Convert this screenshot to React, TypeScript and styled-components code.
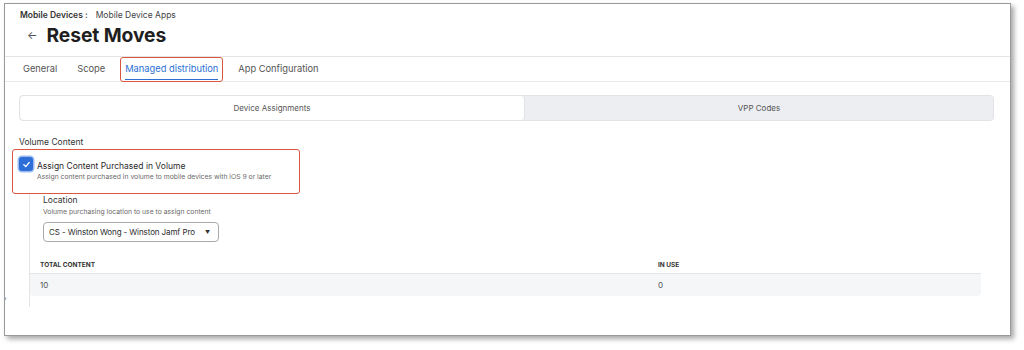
import React from "react";
import styled, { createGlobalStyle } from "styled-components";

const GlobalStyle = createGlobalStyle`
    html, body {
        margin: 0;
        padding: 0;
        background: #ffffff;
    }
    body {
        font-family: Inter, "Noto Sans", "Liberation Sans", sans-serif;
        color: #2b2b2b;
    }
`;

const tabs = ["General", "Scope", "Managed distribution", "App Configuration"];

export default function App() {
    return (
        <Page>
            <GlobalStyle />
            <Frame>
                <Header>
                    <Breadcrumb>
                        <strong>Mobile Devices :</strong>
                        <span>Mobile Device Apps</span>
                    </Breadcrumb>
                    <TitleRow>
                        <BackArrow>←</BackArrow>
                        <Title>Reset Moves</Title>
                    </TitleRow>
                </Header>

                <TabBar>
                    {tabs.map((tab) => (
                        <Tab key={tab} $active={tab === "Managed distribution"}>
                            {tab}
                        </Tab>
                    ))}
                </TabBar>

                <Content>
                    <Segmented>
                        <Segment $selected>Device Assignments</Segment>
                        <Segment>VPP Codes</Segment>
                    </Segmented>

                    <SectionLabel>Volume Content</SectionLabel>

                    <CheckRow>
                        <CheckBox>
                            <svg width="9" height="9" viewBox="0 0 10 10">
                                <path
                                    d="M2 5.2 L4.2 7.3 L8 2.8"
                                    fill="none"
                                    stroke="#ffffff"
                                    strokeWidth="1.4"
                                    strokeLinecap="round"
                                    strokeLinejoin="round"
                                />
                            </svg>
                        </CheckBox>
                        <CheckText>
                            <CheckLabel>Assign Content Purchased in Volume</CheckLabel>
                            <Hint>
                                Assign content purchased in volume to mobile devices
                                with iOS 9 or later
                            </Hint>
                        </CheckText>
                    </CheckRow>

                    <Nested>
                        <Field>
                            <FieldLabel>Location</FieldLabel>
                            <Hint>Volume purchasing location to use to assign content</Hint>
                            <Select>
                                <span>CS - Winston Wong - Winston Jamf Pro</span>
                                <Caret>▼</Caret>
                            </Select>
                        </Field>

                        <Table>
                            <HeadRow>
                                <HeadCell>Total Content</HeadCell>
                                <HeadCell>In Use</HeadCell>
                            </HeadRow>
                            <BodyRow>
                                <Cell>10</Cell>
                                <Cell>0</Cell>
                            </BodyRow>
                        </Table>
                    </Nested>
                </Content>
                <EdgeMark>›</EdgeMark>
            </Frame>
        </Page>
    );
}

const Page = styled.div`
    width: 1024px;
    height: 350px;
    padding: 3px 0 0 4px;
    box-sizing: border-box;
    overflow: hidden;
`;

const Frame = styled.div`
    position: relative;
    width: 1007px;
    height: 333px;
    box-sizing: border-box;
    border: 1px solid #9a9a9a;
    background: #ffffff;
    box-shadow: 3px 3px 5px rgba(0, 0, 0, 0.35);
    overflow: hidden;
`;

const Header = styled.div`
    height: 53px;
    padding: 5px 0 0 15px;
    box-sizing: border-box;
    border-bottom: 1px solid #e4e4e4;
`;

const Breadcrumb = styled.div`
    display: flex;
    gap: 8px;
    font-size: 8.5px;
    line-height: 12px;
    color: #444;

    strong {
        font-weight: 600;
        color: #333;
    }
`;

const TitleRow = styled.div`
    display: flex;
    align-items: center;
    gap: 9px;
    margin-top: 2px;
    padding-left: 7px;
`;

const BackArrow = styled.span`
    font-size: 11px;
    color: #555;
    line-height: 24px;
`;

const Title = styled.h1`
    margin: 0;
    font-size: 19.3px;
    line-height: 24px;
    font-weight: 700;
    color: #1f1f1f;
    letter-spacing: -0.1px;
`;

const TabBar = styled.div`
    display: flex;
    gap: 20px;
    height: 24px;
    padding-left: 18px;
    border-bottom: 1px solid #e8e8e8;
`;

const Tab = styled.div<{ $active?: boolean }>`
    position: relative;
    font-size: 9.3px;
    line-height: 24px;
    height: 22.5px;
    box-sizing: border-box;
    color: ${(p) => (p.$active ? "#2b6fd4" : "#555")};
    border-bottom: 1.5px solid ${(p) => (p.$active ? "#2b6fd4" : "transparent")};

    ${(p) =>
        p.$active &&
        `
        &::after {
            content: "";
            position: absolute;
            left: -5px;
            right: -5px;
            top: 0px;
            bottom: -3px;
            border: 1.5px solid #d9573f;
            border-radius: 3px;
        }
    `}
`;

const Content = styled.div`
    padding: 13px 16px 0 14px;
`;

const Segmented = styled.div`
    display: grid;
    grid-template-columns: 505px 1fr;
    height: 26px;
    border: 1px solid #e1e3e6;
    border-radius: 4px;
    background: #eceef1;
    box-sizing: border-box;
    overflow: hidden;
`;

const Segment = styled.div<{ $selected?: boolean }>`
    display: flex;
    align-items: center;
    justify-content: center;
    font-size: 8px;
    color: #555;
    background: ${(p) => (p.$selected ? "#ffffff" : "#eceef1")};
    border-right: ${(p) => (p.$selected ? "1px solid #e1e3e6" : "none")};
    border-radius: ${(p) => (p.$selected ? "4px" : "0")};
`;

const SectionLabel = styled.div`
    margin-top: 15px;
    font-size: 8.5px;
    line-height: 12px;
    color: #333;
`;

const CheckRow = styled.div`
    position: relative;
    display: flex;
    align-items: flex-start;
    gap: 4px;
    width: 281px;
    margin: 8px 0 0 0;
    padding-top: 1px;

    &::after {
        content: "";
        position: absolute;
        left: -7px;
        top: -7px;
        width: 286px;
        height: 43px;
        border: 1.5px solid #d9573f;
        border-radius: 3px;
    }
`;

const CheckBox = styled.div`
    flex: none;
    width: 14px;
    height: 14px;
    box-sizing: border-box;
    border-radius: 3px;
    background: #2d6fd6;
    box-shadow: 0 0 0 1.5px #9cbcf0;
    display: flex;
    align-items: center;
    justify-content: center;
`;

const CheckText = styled.div`
    display: flex;
    flex-direction: column;
    padding-top: 3px;
`;

const CheckLabel = styled.div`
    font-size: 8.5px;
    line-height: 12px;
    color: #2b2b2b;
`;

const Hint = styled.div`
    font-size: 6.8px;
    line-height: 10px;
    color: #6a6a6a;
`;

const Nested = styled.div`
    margin: 12px 0 0 10px;
    border-left: 1px solid #e4e4e4;
    height: 113px;
    box-sizing: border-box;
`;

const Field = styled.div`
    padding: 0 0 0 13px;
    display: flex;
    flex-direction: column;
    align-items: flex-start;
`;

const FieldLabel = styled.div`
    font-size: 8.5px;
    line-height: 12px;
    color: #333;
    margin-bottom: 1px;
`;

const Select = styled.div`
    display: flex;
    align-items: center;
    justify-content: space-between;
    width: 176px;
    height: 20px;
    margin-top: 5px;
    padding: 0 8px 0 5px;
    box-sizing: border-box;
    border: 1px solid #a9a9a9;
    border-radius: 4px;
    font-size: 8px;
    letter-spacing: -0.1px;
    white-space: nowrap;
    color: #2b2b2b;
`;

const Caret = styled.span`
    font-size: 5px;
    color: #333;
`;

const Table = styled.div`
    margin-top: 14px;
    width: 951px;
`;

const HeadRow = styled.div`
    display: grid;
    grid-template-columns: 618px 1fr;
    height: 17px;
    align-items: center;
    border-bottom: 1px solid #e4e4e4;
`;

const HeadCell = styled.div`
    padding-left: 10px;
    font-size: 6.5px;
    font-weight: 700;
    text-transform: uppercase;
    color: #333;
`;

const BodyRow = styled.div`
    display: grid;
    grid-template-columns: 618px 1fr;
    height: 22px;
    align-items: center;
    background: #f4f6f7;
    border-radius: 0 0 4px 4px;
`;

const Cell = styled.div`
    padding-left: 10px;
    font-size: 8px;
    color: #555;
`;

const EdgeMark = styled.span`
    position: absolute;
    left: -1px;
    top: 290px;
    font-size: 7px;
    color: #777;
`;
